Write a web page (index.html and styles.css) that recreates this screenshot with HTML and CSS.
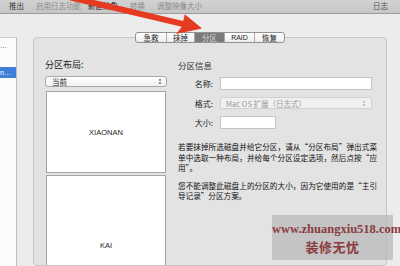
FILE: index.html
```html
<!DOCTYPE html>
<html lang="zh-CN">
<head>
    <meta charset="UTF-8">
    <meta name="viewport" content="width=device-width, initial-scale=1.0">
    <title>磁盘工具 - 分区</title>
    <link rel="stylesheet" href="styles.css">
</head>
<body>
    <div class="toolbar">
        <span class="tool">推出</span>
        <span class="tool dim">启用日志功能</span>
        <span class="tool new">新建映象</span>
        <span class="tool dim">转换</span>
        <span class="tool dim">调整映像大小</span>
        <span class="tool log">日志</span>
    </div>
    <div class="main">
        <div class="sidebar">
            <div class="side-item">…</div>
            <div class="side-item sel">n…</div>
        </div>
        <div class="panel">
            <div class="tabs">
                <span class="tab w30">急救</span>
                <span class="tab w28">抹掉</span>
                <span class="tab w30 active">分区</span>
                <span class="tab w30 latin">RAID</span>
                <span class="tab w30">恢复</span>
            </div>
            <div class="box">
                <div class="layout-col">
                    <div class="layout-title">分区布局:</div>
                    <div class="popup">
                        <span>当前</span>
                        <svg class="updown" width="4" height="7" viewBox="0 0 4 7"><path d="M0.5 2.6 L2 0.8 L3.5 2.6 Z M0.5 4.4 L2 6.2 L3.5 4.4 Z" fill="#444"/></svg>
                    </div>
                    <div class="map">
                        <div class="part first">XIAONAN</div>
                        <div class="part second">KAI</div>
                    </div>
                </div>
                <div class="info-col">
                    <div class="info-title">分区信息</div>
                    <div class="fields">
                        <label>名称:</label>
                        <div class="field"></div>
                        <label>格式:</label>
                        <div class="field select">
                            <span>Mac OS 扩展（日志式）</span>
                            <svg class="updown" width="4" height="7" viewBox="0 0 4 7"><path d="M0.5 2.6 L2 0.8 L3.5 2.6 Z M0.5 4.4 L2 6.2 L3.5 4.4 Z" fill="#aaa"/></svg>
                        </div>
                        <label>大小:</label>
                        <div class="field short"></div>
                    </div>
                    <p class="note">若要抹掉所选磁盘并给它分区，请从“分区布局”弹出式菜单中选取一种布局，并给每个分区设定选项，然后点按“应用”。</p>
                    <p class="note">您不能调整此磁盘上的分区的大小，因为它使用的是“主引导记录”分区方案。</p>
                </div>
            </div>
        </div>
    </div>

    <svg class="arrow" width="400" height="60" viewBox="0 0 400 60">
        <polygon points="60.7,-7.9 183.2,21 184.8,14.2 202,28.5 176,34 181.8,26.8 59.3,-2.1" fill="#e63b20"/>
    </svg>

    <div class="watermark">
        <div class="wm-url">www.zhuangxiu518.com</div>
        <div class="wm-name">装修无忧</div>
    </div>
</body>
</html>
```

FILE: styles.css
```css
* { margin: 0; padding: 0; box-sizing: border-box; }
body {
    width: 400px;
    height: 266px;
    overflow: hidden;
    position: relative;
    background: #ececec;
    font-family: "Noto Sans CJK SC", "Liberation Sans", sans-serif;
    color: #222;
}

/* toolbar strip at the top */
.toolbar {
    height: 14px;
    display: flex;
    align-items: center;
    padding: 0 12px 1px 9px;
    gap: 12px;
    background: linear-gradient(#d2d2d2, #c6c6c6);
    border-bottom: 1px solid #9c9c9c;
    font-size: 7.5px;
    line-height: 1;
}
.tool { color: #333; }
.tool.dim { color: #8a8a8a; }
.tool.new { margin-left: -5px; color: #222; }
.tool.log { margin-left: auto; color: #555; }

.main {
    display: flex;
    height: 252px;
}

.sidebar {
    width: 17px;
    margin-top: 23px;
    background: #fbfbfb;
    border-top: 1px solid #cfcfcf;
    border-right: 1px solid #bdbdbd;
    font-family: "Liberation Sans", sans-serif;
    font-size: 7px;
    overflow: hidden;
    white-space: nowrap;
}
.side-item {
    height: 11px;
    line-height: 11px;
    margin-top: 2px;
    color: #333;
}
.side-item.sel {
    margin-top: 16px;
    background: #3f7fd8;
    color: #fff;
}

/* tab group */
.panel {
    width: 354px;
    margin-left: 16px;
    padding-top: 18px;
    display: flex;
    flex-direction: column;
}
.tabs {
    position: relative;
    z-index: 1;
    align-self: center;
    display: flex;
    height: 11px;
    border: 1px solid #929292;
    border-radius: 3px;
    background: linear-gradient(#ffffff, #ededed);
    overflow: hidden;
}
.tab {
    font-size: 7.5px;
    line-height: 9px;
    text-align: center;
    color: #222;
    border-left: 1px solid #a8a8a8;
}
.tab:first-child { border-left: none; }
.tab.w30 { width: 30px; }
.tab.w28 { width: 28px; }
.tab.latin { font-family: "Liberation Sans", sans-serif; font-size: 7px; }
.tab.active { background: #7a7a7a; color: #d8d8d8; }

.box {
    flex: 1;
    margin-top: -6px;
    border: 1px solid #c6c6c6;
    border-radius: 4px;
    background: #e3e3e3;
    padding: 21px 0 0 11px;
    display: grid;
    grid-template-columns: 122px 199px;
    column-gap: 11px;
    align-items: start;
    overflow: hidden;
}

/* partition layout column */
.layout-title {
    font-size: 9px;
    line-height: 12px;
    color: #222;
}
.popup {
    margin-top: 5px;
    height: 11px;
    display: flex;
    align-items: center;
    justify-content: space-between;
    padding: 0 4px 0 6px;
    border: 1px solid #a9a9a9;
    border-radius: 3px;
    background: linear-gradient(#ffffff, #f1f1f1);
    font-size: 7.5px;
    color: #222;
}
.updown { display: block; }
.map {
    margin: 4px 1px 0;
}
.part {
    display: flex;
    align-items: center;
    justify-content: center;
    background: #fff;
    border: 1px solid #a4a4a4;
    font-family: "Liberation Sans", sans-serif;
    font-size: 7.5px;
    color: #222;
}
.part.first { height: 82px; }
.part.second { height: 140px; margin-top: 2px; }

/* partition info column */
.info-title {
    font-size: 8.5px;
    line-height: 12px;
    color: #333;
}
.fields {
    margin-top: 6px;
    display: grid;
    grid-template-columns: 35px 152px;
    grid-template-rows: 13px 12px 13px;
    column-gap: 7px;
    row-gap: 7px;
}
.fields label {
    font-size: 8px;
    line-height: 13px;
    text-align: right;
    color: #222;
}
.field {
    background: #fff;
    border: 1px solid #c4c4c4;
}
.field.short { width: 56px; }
.field.select {
    display: flex;
    align-items: center;
    justify-content: space-between;
    padding: 0 5px 0 5px;
    background: #f0f0f0;
    border-color: #d0d0d0;
    border-radius: 2px;
    font-size: 7.5px;
    color: #9a9a9a;
}
.note {
    margin-top: 13px;
    font-size: 7.6px;
    line-height: 10.5px;
    text-align: justify;
    color: #111;
}
.note + .note { margin-top: 7px; }

/* red annotation arrow drawn over the screen */
.arrow {
    position: absolute;
    left: 0;
    top: 0;
    z-index: 5;
}

.watermark {
    position: absolute;
    left: 272px;
    top: 215px;
    width: 121px;
    height: 45px;
    background: rgba(184, 184, 184, 0.72);
    color: #8a3b40;
    text-align: center;
    z-index: 6;
}
.wm-url {
    margin-top: 7px;
    font-family: "Liberation Serif", serif;
    font-weight: bold;
    font-size: 12.5px;
    line-height: 14px;
}
.wm-name {
    margin-top: 3px;
    font-size: 13px;
    line-height: 15px;
    font-weight: bold;
    letter-spacing: 0.5px;
}
```
